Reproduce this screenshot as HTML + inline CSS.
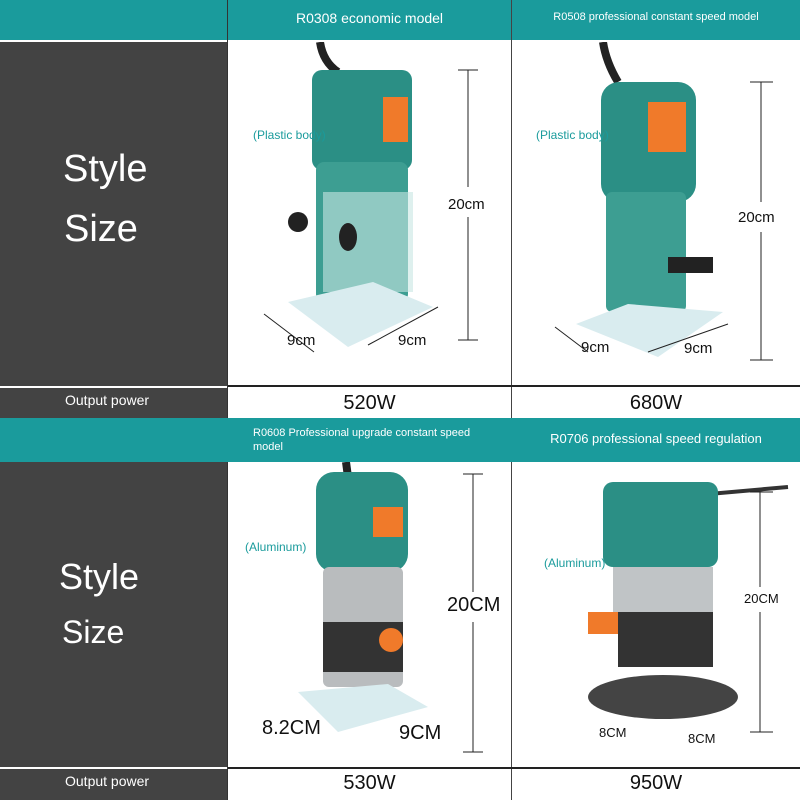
<!DOCTYPE html>
<html><head><style>
*{margin:0;padding:0;box-sizing:border-box}
body{width:800px;height:800px;position:relative;overflow:hidden;background:#fff;font-family:"Liberation Sans",sans-serif}
.a{position:absolute}
.teal{background:#1a9b9c}
.dark{background:#434343}
.w{color:#fff}
.lbl{color:#fff;font-size:38px}
.cap{color:#1a9b9c;font-size:12px}
.pw{font-size:20px;color:#111;text-align:center}
.dim{font-size:15px;color:#111}
</style></head><body>
<!-- row 1 header -->
<div class="a teal" style="left:0;top:0;width:800px;height:40px"></div>
<div class="a" style="left:0;top:40px;width:227px;height:2px;background:#fff"></div>
<div class="a w" style="left:227px;top:10px;width:285px;text-align:center;font-size:14px">R0308 economic model</div>
<div class="a w" style="left:512px;top:11px;width:288px;text-align:center;font-size:11px">R0508 professional constant speed model</div>
<div class="a" style="left:227px;top:0;width:1px;height:800px;background:#333"></div>
<div class="a" style="left:511px;top:0;width:1px;height:800px;background:#444"></div>
<!-- left gray 1 -->
<div class="a dark" style="left:0;top:42px;width:227px;height:344px"></div>
<div class="a lbl" style="left:63px;top:148px">Style</div>
<div class="a lbl" style="left:64px;top:208px">Size</div>
<div class="a dark" style="left:0;top:388px;width:227px;height:30px"></div>
<div class="a" style="left:0;top:386px;width:227px;height:2px;background:#fff"></div>
<div class="a w" style="left:65px;top:392px;font-size:14px">Output power</div>
<div class="a" style="left:228px;top:385px;width:572px;height:2px;background:#222"></div>
<div class="a pw" style="left:228px;top:392px;width:283px">520W</div>
<div class="a pw" style="left:512px;top:392px;width:288px">680W</div>
<!-- tools row 1 -->
<svg class="a" style="left:228px;top:42px" width="572" height="343">
<path d="M92 0 Q95 20 110 30" stroke="#222" stroke-width="8" fill="none"/>
<rect x="84" y="28" width="100" height="100" rx="10" fill="#2b8f85"/>
<rect x="155" y="55" width="25" height="45" fill="#f07a2a"/>
<rect x="88" y="120" width="92" height="140" rx="8" fill="#3d9e92"/>
<rect x="95" y="150" width="90" height="100" fill="#c8e6e2" opacity=".6"/>
<path d="M60 260 L145 240 L205 265 L120 305 Z" fill="#d9ecef"/>
<circle cx="70" cy="180" r="10" fill="#222"/><ellipse cx="120" cy="195" rx="9" ry="14" fill="#222"/>
<path d="M36 272 L86 310 M140 303 L210 265" stroke="#222" fill="none"/>
<path d="M240 28 L240 298 M230 28 H250 M230 298 H250" stroke="#222"/>
<rect x="225" y="145" width="35" height="30" fill="#fff"/>
<path d="M375 0 Q378 20 390 40" stroke="#222" stroke-width="8" fill="none"/>
<rect x="373" y="40" width="95" height="120" rx="18" fill="#2b8f85"/>
<rect x="420" y="60" width="38" height="50" fill="#f07a2a"/>
<rect x="378" y="150" width="80" height="120" rx="6" fill="#3d9e92"/>
<path d="M348 282 L400 262 L495 270 L430 315 Z" fill="#d9ecef"/>
<rect x="440" y="215" width="45" height="16" fill="#222"/>
<path d="M327 285 L360 310 M420 310 L500 282" stroke="#222" fill="none"/>
<path d="M533 40 L533 318 M522 40 H545 M522 318 H545" stroke="#222"/>
<rect x="505" y="160" width="50" height="30" fill="#fff"/>
</svg>
<div class="a cap" style="left:253px;top:128px">(Plastic body)</div>
<div class="a cap" style="left:536px;top:128px">(Plastic body)</div>
<div class="a dim" style="left:448px;top:196px">20cm</div>
<div class="a dim" style="left:738px;top:209px">20cm</div>
<div class="a dim" style="left:287px;top:332px">9cm</div>
<div class="a dim" style="left:398px;top:332px">9cm</div>
<div class="a dim" style="left:581px;top:339px">9cm</div>
<div class="a dim" style="left:684px;top:340px">9cm</div>
<!-- row 2 header -->
<div class="a teal" style="left:0;top:418px;width:800px;height:44px"></div>
<div class="a w" style="left:253px;top:426px;font-size:11px;line-height:14px;width:240px">R0608 Professional upgrade constant speed model</div>
<div class="a w" style="left:512px;top:431px;width:288px;text-align:center;font-size:13px">R0706 professional speed regulation</div>
<div class="a dark" style="left:0;top:462px;width:227px;height:306px"></div>
<div class="a lbl" style="left:59px;top:556px;font-size:36px">Style</div>
<div class="a lbl" style="left:62px;top:614px;font-size:32px">Size</div>
<div class="a dark" style="left:0;top:769px;width:227px;height:31px"></div>
<div class="a" style="left:0;top:767px;width:227px;height:2px;background:#fff"></div>
<div class="a w" style="left:65px;top:773px;font-size:14px">Output power</div>
<div class="a" style="left:228px;top:767px;width:572px;height:2px;background:#222"></div>
<div class="a pw" style="left:228px;top:772px;width:283px">530W</div>
<div class="a pw" style="left:512px;top:772px;width:288px">950W</div>
<svg class="a" style="left:228px;top:462px" width="572" height="305">
<path d="M118 0 L120 15" stroke="#222" stroke-width="8"/>
<rect x="88" y="10" width="92" height="100" rx="18" fill="#2b8f85"/>
<rect x="145" y="45" width="30" height="30" fill="#f07a2a"/>
<rect x="95" y="105" width="80" height="120" rx="6" fill="#b9bcbe"/>
<rect x="95" y="160" width="80" height="50" fill="#333"/>
<circle cx="163" cy="178" r="12" fill="#f07a2a"/>
<path d="M70 230 L160 222 L200 245 L110 270 Z" fill="#d9ecef"/>
<path d="M245 12 L245 290 M235 12 H255 M235 290 H255" stroke="#222"/>
<rect x="220" y="130" width="60" height="30" fill="#fff"/>
<path d="M390 40 L560 25" stroke="#333" stroke-width="4"/>
<rect x="375" y="20" width="115" height="85" rx="10" fill="#2b8f85"/>
<rect x="385" y="105" width="100" height="45" fill="#c0c4c6"/>
<rect x="390" y="150" width="95" height="55" fill="#333"/>
<rect x="360" y="150" width="30" height="22" fill="#f07a2a"/>
<ellipse cx="435" cy="235" rx="75" ry="22" fill="#444"/>
<path d="M532 30 L532 270 M522 30 H545 M522 270 H545" stroke="#222"/>
<rect x="510" y="125" width="50" height="25" fill="#fff"/>
</svg>
<div class="a cap" style="left:245px;top:540px">(Aluminum)</div>
<div class="a cap" style="left:544px;top:556px">(Aluminum)</div>
<div class="a" style="left:447px;top:594px;font-size:20px;color:#111">20CM</div>
<div class="a" style="left:744px;top:591px;font-size:13px;color:#111">20CM</div>
<div class="a" style="left:262px;top:717px;font-size:20px;color:#111">8.2CM</div>
<div class="a" style="left:399px;top:722px;font-size:20px;color:#111">9CM</div>
<div class="a" style="left:599px;top:725px;font-size:13px;color:#111">8CM</div>
<div class="a" style="left:688px;top:731px;font-size:13px;color:#111">8CM</div>
</body></html>
